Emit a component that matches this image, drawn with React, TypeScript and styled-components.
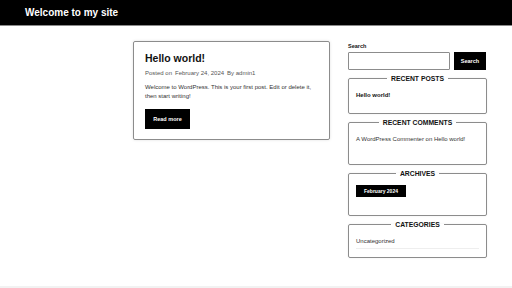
import styled, { createGlobalStyle } from 'styled-components';

const GlobalStyles = createGlobalStyle`
  html, body {
    margin: 0;
    padding: 0;
    background: #fff;
  }

  body {
    font-family: 'Liberation Sans', Arial, sans-serif;
    color: #222;
  }
`;

const Page = styled.div`
  min-height: 288px;
  display: flex;
  flex-direction: column;
`;

const Header = styled.header`
  height: 25px;
  background: #000;
  border-bottom: 1px solid #8a8a8a;
  display: flex;
  align-items: center;
  padding-left: 25px;
`;

const SiteTitle = styled.h1`
  margin: 0;
  font-size: 10px;
  font-weight: 700;
  color: #fff;
`;

const Main = styled.main`
  flex: 1 1 auto;
  display: flex;
  justify-content: flex-end;
  gap: 18px;
  padding: 15px 25px 20px 0;
`;

const Content = styled.div`
  width: 197px;
`;

const Card = styled.article`
  border: 1px solid #8c8c8c;
  border-radius: 2px;
  box-shadow: 0 0 3px rgba(0, 0, 0, 0.12);
  padding: 9px 11px 10px;
`;

const PostTitle = styled.h2`
  margin: 0;
  font-size: 10.5px;
  font-weight: 700;
  color: #111;
  line-height: 15px;
`;

const Meta = styled.div`
  margin-top: 3px;
  font-size: 6px;
  line-height: 8px;
  color: #555;
`;

const MetaPart = styled.span`
  margin-right: 3px;
`;

const Excerpt = styled.p`
  margin: 6px 0 8px;
  font-size: 6px;
  line-height: 9px;
  color: #333;
`;

const BlackButton = styled.button<{ $w?: number; $h?: number }>`
  display: block;
  width: ${(p) => p.$w ?? 45}px;
  height: ${(p) => p.$h ?? 20}px;
  background: #000;
  color: #fff;
  border: none;
  padding: 0;
  font-family: inherit;
  font-size: 5.5px;
  font-weight: 700;
`;

const Sidebar = styled.aside`
  width: 139px;
  display: flex;
  flex-direction: column;
  gap: 5px;
  padding-top: 2px;
`;

const SearchBlock = styled.div`
  display: flex;
  flex-direction: column;
  gap: 3px;
`;

const Label = styled.label`
  font-size: 5.5px;
  font-weight: 700;
  color: #111;
`;

const SearchRow = styled.div`
  display: flex;
  gap: 4px;
`;

const Input = styled.input`
  width: 102px;
  height: 18px;
  box-sizing: border-box;
  border: 1px solid #8c8c8c;
  border-radius: 1px;
  padding: 0 3px;
  font-size: 7px;
`;

const Widget = styled.fieldset<{ $h: number; $pt?: number }>`
  margin: 0;
  height: ${(p) => p.$h}px;
  box-sizing: border-box;
  border: 1px solid #8c8c8c;
  border-radius: 2px;
  padding: ${(p) => p.$pt ?? 10}px 7px 0;
  box-shadow: 0 0 2px rgba(0, 0, 0, 0.08);
`;

const Legend = styled.legend`
  margin: 0 auto;
  padding: 0 4px;
  font-size: 6.8px;
  font-weight: 700;
  color: #111;
  text-transform: uppercase;
`;

const WidgetText = styled.div<{ $bold?: boolean; $line?: boolean }>`
  font-size: 6px;
  font-weight: ${(p) => (p.$bold ? 700 : 400)};
  color: ${(p) => (p.$bold ? '#111' : '#333')};
  padding-bottom: 4px;
  border-bottom: ${(p) => (p.$line ? '1px solid #eee' : 'none')};
`;

const Tag = styled.div`
  display: flex;
  align-items: center;
  justify-content: center;
  width: 50px;
  height: 12px;
  background: #000;
  color: #fff;
  font-size: 5px;
  font-weight: 700;
`;

const Footer = styled.footer`
  height: 2px;
  background: #f2f2f2;
`;

export default function App() {
  return (
    <>
      <GlobalStyles />
      <Page>
        <Header>
          <SiteTitle>Welcome to my site</SiteTitle>
        </Header>

        <Main>
          <Content>
            <Card>
              <PostTitle>Hello world!</PostTitle>
              <Meta>
                <MetaPart>Posted on</MetaPart>
                <MetaPart>February 24, 2024</MetaPart>
                <span>By admin1</span>
              </Meta>
              <Excerpt>Welcome to WordPress. This is your first post. Edit or delete it, then start writing!</Excerpt>
              <BlackButton>Read more</BlackButton>
            </Card>
          </Content>

          <Sidebar>
            <SearchBlock>
              <Label>Search</Label>
              <SearchRow>
                <Input />
                <BlackButton $w={32} $h={18}>
                  Search
                </BlackButton>
              </SearchRow>
            </SearchBlock>

            <Widget $h={39}>
              <Legend>Recent Posts</Legend>
              <WidgetText $bold>Hello world!</WidgetText>
            </Widget>

            <Widget $h={46}>
              <Legend>Recent Comments</Legend>
              <WidgetText>A WordPress Commenter on Hello world!</WidgetText>
            </Widget>

            <Widget $h={46} $pt={8}>
              <Legend>Archives</Legend>
              <Tag>February 2024</Tag>
            </Widget>

            <Widget $h={37}>
              <Legend>Categories</Legend>
              <WidgetText $line>Uncategorized</WidgetText>
            </Widget>
          </Sidebar>
        </Main>

        <Footer />
      </Page>
    </>
  );
}
